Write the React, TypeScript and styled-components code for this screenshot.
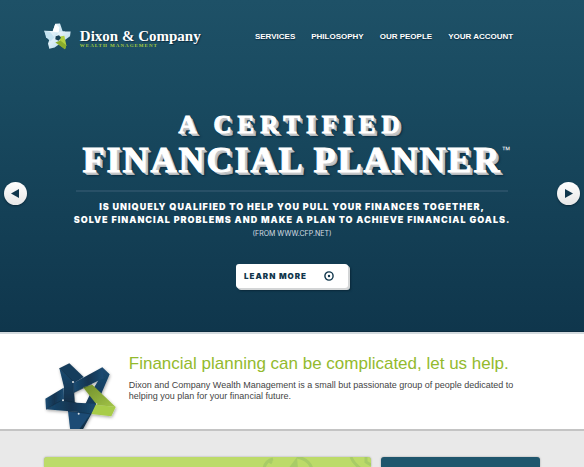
import React from "react";
import styled, { createGlobalStyle } from "styled-components";

const sans = `"Liberation Sans", Arial, sans-serif`;
const serif = `"Liberation Serif", "Times New Roman", serif`;
const display = `Inter, "Open Sans", sans-serif`;

const GlobalStyle = createGlobalStyle`
  * { box-sizing: border-box; }
  body { margin: 0; background: #e9e9e9; font-family: ${sans}; }
  h1, h2, p { margin: 0; }
`;

const Page = styled.div`
  display: flex;
  flex-direction: column;
  min-height: 100vh;
`;

const Container = styled.div`
  width: 85%;
  max-width: 980px;
  margin: 0 auto;
`;

const Hero = styled.div`
  position: relative;
  padding-bottom: 43px;
  background: linear-gradient(#1e5167, #194a60 30%, #0f364c);
  border-bottom: 1px solid #0b2c40;
`;

const Header = styled(Container)`
  display: flex;
  align-items: flex-start;
  padding-top: 23px;
  height: 110px;
`;

const Brand = styled.a`
  display: flex;
  gap: 9px;
  color: #fff;
  text-decoration: none;
`;

const BrandText = styled.span`
  display: flex;
  flex-direction: column;
  padding-top: 6px;
`;

const BrandName = styled.span`
  font: bold 15px/15px ${serif};
  text-shadow: 1px 1px 1px #0b2c40;
  white-space: nowrap;
`;

const BrandTag = styled.span`
  font: bold 5px/4px ${serif};
  letter-spacing: 1px;
  color: #a5c93d;
  white-space: nowrap;
`;

const Nav = styled.nav`
  display: flex;
  gap: 16px;
  margin-left: auto;
  padding: 9px 27px 0 0;
`;

const NavLink = styled.a`
  font: bold 8px/10px ${sans};
  color: #fff;
  text-decoration: none;
  text-shadow: 0 1px 1px #0b2c40;
  white-space: nowrap;
`;

const HeroBody = styled.div`
  display: flex;
  flex-direction: column;
  align-items: center;
  text-align: center;
  color: #fff;
`;

const Title = styled.h1`
  font: bold 36px/40px ${serif};
  letter-spacing: 2px;
  white-space: nowrap;
  -webkit-text-stroke: 1px #fff;
  text-shadow: 1px 1px 0 #c4c6c8, 2px 2px 0 #c4c6c8, 3px 3px 0 #b4b8bb,
    4px 4px 2px #0b2c40;
`;

const TitleLead = styled.span`
  display: block;
  font-size: 25px;
  line-height: 30px;
  letter-spacing: 6px;
`;

const TitleMain = styled.span`
  position: relative;
`;

const Trademark = styled.span`
  position: absolute;
  left: 100%;
  top: 5px;
  font: 9px/10px ${sans};
  letter-spacing: 0;
  text-shadow: none;
  -webkit-text-stroke: 0;
`;

const Rule = styled.hr`
  width: 74%;
  height: 2px;
  margin: 10px 0 8px;
  border: 0;
  background: #285067;
`;

const Pitch = styled.p`
  font: 900 9px/13px ${display};
  letter-spacing: 1px;
  white-space: nowrap;
`;

const Source = styled.p`
  margin-top: 4px;
  font: 400 7px/8px ${display};
  color: #d5dee3;
`;

const LearnMore = styled.button`
  display: flex;
  align-items: center;
  justify-content: space-between;
  width: 112px;
  height: 24px;
  margin-top: 26px;
  padding: 0 14px 0 8px;
  border: 0;
  border-radius: 3px;
  background: #fff;
  color: #10364c;
  font: 900 8px/10px ${display};
  letter-spacing: 1px;
  white-space: nowrap;
  box-shadow: 1px 1px 0 #d3d5d6, 2px 2px 0 #d3d5d6, 3px 3px 2px #0a2839;
`;

const Arrow = styled.button<{ $side: "left" | "right" }>`
  position: absolute;
  top: 182px;
  ${(p) => p.$side}: 4px;
  width: 23px;
  height: 23px;
  padding: 0;
  border: 0;
  border-radius: 50%;
  background: linear-gradient(#fff, #e6e6e6);
  box-shadow: 0 1px 2px #0a2839;
  svg { display: block; }
`;

const Intro = styled.section`
  background: #fff;
  border-top: 2px solid #d3dade;
  border-bottom: 2px solid #c4c4c4;
`;

const IntroRow = styled(Container)`
  display: flex;
  gap: 11px;
  height: 95px;
  overflow: hidden;
`;

const IntroMark = styled.div`
  flex: none;
  padding-top: 28px;
  svg { display: block; overflow: visible; }
`;

const IntroText = styled.div`
  padding-top: 19px;
`;

const Heading = styled.h2`
  font: 17px/22px ${sans};
  color: #93ba2d;
`;

const Copy = styled.p`
  margin-top: 5px;
  font: 9px/11px ${sans};
  color: #444;
`;

const Cards = styled(Container)`
  flex: 1;
  display: grid;
  grid-template-columns: 327fr 159fr;
  gap: 10px;
  padding-top: 26px;
`;

const Card = styled.section<{ $color: string }>`
  min-height: 10px;
  overflow: hidden;
  border-radius: 3px 3px 0 0;
  background: ${(p) => p.$color};
  box-shadow: 0 0 2px #999;
  svg { display: block; margin-left: auto; }
`;

const LogoStar = () => (
  <svg width="27" height="27" viewBox="42 41 81 80" aria-hidden="true">
    <defs>
      <linearGradient id="ice" x1="0" y1="0" x2="1" y2="1">
        <stop offset="0" stopColor="#fff" />
        <stop offset="1" stopColor="#a5d2e8" />
      </linearGradient>
    </defs>
    <path d="M43 64L105 66L102 82L50 83Z" fill="url(#ice)" />
    <path d="M76 43L90 42L99 68L86 75L81 66L74 88L58 118L54 102Z" fill="url(#ice)" />
    <path d="M43 64L60 67L78 91L73 106L48 83Z" fill="#c4e2f0" />
    <path d="M90 66L122 66L120 80L74 114L58 118L56 102Z" fill="url(#ice)" />
    <path d="M76 43L68 67L86 69L88 53Z" fill="#fff" />
    <path d="M90 81L103 79L109 107L105 119L88 106Z" fill="#b3d042" />
    <path d="M76 99L91 93L109 107L105 119Z" fill="#8aac2c" />
    <path d="M77 80L87 77L93 85L86 94L76 89Z" fill="#174257" />
  </svg>
);

const RibbonStar = () => (
  <svg width="74" height="67" viewBox="46 115 222 201" aria-hidden="true">
    <defs>
      <linearGradient id="down" x1="0" y1="0" x2="0" y2="1">
        <stop offset="0" stopColor="#1b4a70" />
        <stop offset="1" stopColor="#112f48" />
      </linearGradient>
      <linearGradient id="across" x1="0" y1="0" x2="1" y2="0">
        <stop offset="0" stopColor="#1c4c73" />
        <stop offset="0.5" stopColor="#123450" />
        <stop offset="1" stopColor="#1c4c73" />
      </linearGradient>
      <linearGradient id="lime" x1="0" y1="0" x2="1" y2="1">
        <stop offset="0" stopColor="#708d2b" />
        <stop offset="1" stopColor="#a3c548" />
      </linearGradient>
      <filter id="soft" x="-20%" y="-20%" width="140%" height="140%">
        <feDropShadow dx="2" dy="4" stdDeviation="5" floodColor="#000" floodOpacity="0.35" />
      </filter>
    </defs>
    <g filter="url(#soft)">
      <path d="M92 134L122 119L165 160L136 178Z" fill="#153c5b" />
      <path d="M221 131L243 152L205 240L188 271L160 322H140L152 264L172 237L186 208L208 172Z" fill="url(#down)" />
      <path d="M118 262L125 322H148L188 268Z" fill="#1a4c74" />
      <path d="M92 134L133 173L138 240L103 232L106 190Z" fill="url(#down)" />
      <path d="M133 179L221 131L224 164L165 192L135 207Z" fill="url(#across)" />
      <path d="M50 225L105 192L105 230L52 257Z" fill="url(#across)" />
      <path d="M52 257L98 230L143 237L202 240L190 270L150 265Z" fill="url(#across)" />
      <path d="M163 191L191 183L261 250L205 244Z" fill="url(#lime)" />
      <path d="M201 243L261 250L248 278L188 271Z" fill="#a8cc49" />
    </g>
    <g fill="none" stroke="#0c2439" strokeWidth="2" strokeOpacity="0.7">
      <path d="M92 134L133 173L138 238" />
      <path d="M135 207L190 181" />
      <path d="M52 257L98 230L143 237" />
      <path d="M118 263L150 266L188 271" />
    </g>
    <g fill="#dce2e6">
      <circle cx="133" cy="175" r="3" />
      <circle cx="103" cy="230" r="3" />
      <circle cx="150" cy="270" r="3" />
      <circle cx="204" cy="241" r="2" />
    </g>
  </svg>
);

const Triangle = ({ flip }: { flip?: boolean }) => (
  <svg width="23" height="23" viewBox="0 0 23 23" aria-hidden="true">
    <path d={flip ? "M15 7V16L7 11.5Z" : "M8 7V16L16 11.5Z"} fill="#10364c" />
  </svg>
);

const Target = () => (
  <svg width="10" height="10" viewBox="0 0 10 10" aria-hidden="true">
    <circle cx="5" cy="5" r="4.1" fill="none" stroke="#10364c" strokeWidth="1.4" />
    <circle cx="5" cy="5" r="1.2" fill="#10364c" />
  </svg>
);

const Flourish = () => (
  <svg width="111" height="10" viewBox="0 0 111 10" aria-hidden="true">
    <g fill="none" stroke="#a8cc66" strokeWidth="3">
      <path d="M4 12Q5 4 13 2M12 6L9 4" />
      <path d="M37 0Q49 2 52 12" />
      <path d="M91 0Q93 6 101 12" />
      <path d="M106 0V5L111 8" />
    </g>
    <path d="M28 12L37 0L38 12Z" fill="#a8cc66" />
  </svg>
);

const links = ["Services", "Philosophy", "Our People", "Your Account"];

export default function App() {
  return (
    <Page>
      <GlobalStyle />
      <Hero>
        <Header as="header">
          <Brand href="#">
            <LogoStar />
            <BrandText>
              <BrandName>Dixon &amp; Company</BrandName>
              <BrandTag>WEALTH MANAGEMENT</BrandTag>
            </BrandText>
          </Brand>
          <Nav>
            {links.map((label) => (
              <NavLink key={label} href="#">{label.toUpperCase()}</NavLink>
            ))}
          </Nav>
        </Header>
        <HeroBody>
          <Title>
            <TitleLead>A CERTIFIED</TitleLead>
            <TitleMain>
              FINANCIAL PLANNER<Trademark>™</Trademark>
            </TitleMain>
          </Title>
          <Rule />
          <Pitch>
            IS UNIQUELY QUALIFIED TO HELP YOU PULL YOUR FINANCES TOGETHER,
            <br />
            SOLVE FINANCIAL PROBLEMS AND MAKE A PLAN TO ACHIEVE FINANCIAL GOALS.
          </Pitch>
          <Source>(FROM WWW.CFP.NET)</Source>
          <LearnMore type="button">
            LEARN MORE
            <Target />
          </LearnMore>
        </HeroBody>
        <Arrow type="button" $side="left" aria-label="Previous"><Triangle flip /></Arrow>
        <Arrow type="button" $side="right" aria-label="Next"><Triangle /></Arrow>
      </Hero>
      <Intro>
        <IntroRow>
          <IntroMark><RibbonStar /></IntroMark>
          <IntroText>
            <Heading>Financial planning can be complicated, let us help.</Heading>
            <Copy>
              Dixon and Company Wealth Management is a small but passionate group
              of people dedicated to helping you plan for your financial future.
            </Copy>
          </IntroText>
        </IntroRow>
      </Intro>
      <Cards>
        <Card $color="#bcdb69"><Flourish /></Card>
        <Card $color="#1f566d" />
      </Cards>
    </Page>
  );
}
